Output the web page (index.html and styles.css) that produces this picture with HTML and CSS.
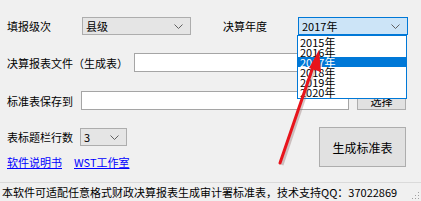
FILE: index.html
```html
<!DOCTYPE html>
<html lang="zh-CN">

<head>
  <meta charset="UTF-8">
  <link rel="stylesheet" href="styles.css">
  <title>决算报表转换</title>
</head>

<body>
  <div class="window">
    <div class="form">
      <div class="row row-level">
        <span class="label lbl-level">填报级次</span>
        <div class="combo combo-level">
          <span>县级</span>
          <svg class="chev" width="9" height="5" viewBox="0 0 9 5"><path d="M0.5 0.5 L4.5 4.5 L8.5 0.5" fill="none" stroke="#606060" stroke-width="1"/></svg>
        </div>
        <span class="label lbl-year">决算年度</span>
        <div class="combo combo-year">
          <span>2017年</span>
          <svg class="chev" width="9" height="5" viewBox="0 0 9 5"><path d="M0.5 0.5 L4.5 4.5 L8.5 0.5" fill="none" stroke="#606060" stroke-width="1"/></svg>
        </div>
      </div>

      <div class="row row-file">
        <span class="label lbl-file">决算报表文件（生成表）</span>
        <div class="textbox tb-file"></div>
        <div class="btn btn-pick">选择</div>
      </div>

      <div class="row row-save">
        <span class="label lbl-save">标准表保存到</span>
        <div class="textbox tb-save"></div>
        <div class="btn btn-pick">选择</div>
      </div>

      <div class="bottom">
        <div class="bottom-left">
          <div class="row row-rows">
            <span class="label lbl-rows">表标题栏行数</span>
            <div class="combo combo-rows">
              <span>3</span>
              <svg class="chev" width="9" height="5" viewBox="0 0 9 5"><path d="M0.5 0.5 L4.5 4.5 L8.5 0.5" fill="none" stroke="#606060" stroke-width="1"/></svg>
            </div>
          </div>
          <div class="links">
            <a href="#">软件说明书</a>
            <a href="#">WST工作室</a>
          </div>
        </div>
        <div class="btn btn-make">生成标准表</div>
      </div>
    </div>

    <div class="statusbar">
      <span>本软件可适配任意格式财政决算报表生成审计署标准表，技术支持QQ：37022869</span>
      <svg class="grip" width="8" height="8" viewBox="0 0 8 8">
        <rect x="6" y="0" width="1" height="1" fill="#a0a0a0"/>
        <rect x="3" y="3" width="1" height="1" fill="#a0a0a0"/>
        <rect x="6" y="3" width="1" height="1" fill="#a0a0a0"/>
        <rect x="0" y="6" width="1" height="1" fill="#a0a0a0"/>
        <rect x="3" y="6" width="1" height="1" fill="#a0a0a0"/>
        <rect x="6" y="6" width="1" height="1" fill="#a0a0a0"/>
      </svg>
    </div>

    <!-- 年度下拉列表 -->
    <ul class="droplist">
      <li>2015年</li>
      <li>2016年</li>
      <li class="selected">2017年</li>
      <li>2018年</li>
      <li>2019年</li>
      <li>2020年</li>
    </ul>

    <!-- 标注箭头 -->
    <svg class="arrow" width="421" height="201" viewBox="0 0 421 201">
      <line x1="281" y1="164" x2="314" y2="66" stroke="#8a6060" stroke-opacity="0.35" stroke-width="3" transform="translate(1,1)"/>
      <line x1="280" y1="163" x2="314" y2="64" stroke="#e8141c" stroke-width="3" stroke-linecap="round"/>
      <polygon points="319,50 321,72 309,68" fill="#e8141c"/>
    </svg>
  </div>
</body>

</html>
```

FILE: styles.css
```css
body {
  margin: 0;
  background-color: #f0f0f0;
  font-family: "Noto Sans CJK SC", "Microsoft YaHei", sans-serif;
  font-size: 11px;
  color: #000;
}

.window {
  position: relative;
  width: 421px;
  height: 201px;
  overflow: hidden;
}

.form {
  padding: 17px 0 0 7px;
  height: 182px;
  box-sizing: border-box;
}

.row {
  display: flex;
  align-items: center;
}

.label {
  flex: none;
  line-height: 14px;
}

.row-level {
  height: 18px;
}

.lbl-level {
  width: 75px;
}

.lbl-year {
  width: 75px;
  margin-left: 32px;
}

.combo {
  display: flex;
  align-items: center;
  justify-content: space-between;
  box-sizing: border-box;
  height: 18px;
  padding: 0 7px 0 3px;
  border: 1px solid #adadad;
  background-color: #e5e5e5;
}

.combo-level {
  width: 109px;
}

.combo-year {
  width: 110px;
  border-color: #0078d7;
  background-color: #cce4f7;
}

.combo-rows {
  width: 47px;
}

.row-file {
  margin-top: 18px;
  height: 19px;
}

.lbl-file {
  width: 127px;
}

.textbox {
  box-sizing: border-box;
  height: 19px;
  border: 1px solid #a5a5a5;
  background-color: #fff;
}

.tb-file {
  width: 215px;
}

.tb-save {
  width: 268px;
}

.btn {
  display: flex;
  align-items: center;
  justify-content: center;
  box-sizing: border-box;
  border: 1px solid #adadad;
  background-color: #e1e1e1;
}

.btn-pick {
  width: 49px;
  height: 19px;
  margin-left: 8px;
}

.row-save {
  margin-top: 19px;
  height: 19px;
}

.lbl-save {
  width: 74px;
}

.bottom {
  display: flex;
  margin-top: 17px;
}

.bottom-left {
  flex: 1;
}

.row-rows {
  margin-top: 1px;
  height: 18px;
}

.lbl-rows {
  width: 73px;
}

.links {
  display: flex;
  gap: 12px;
  margin-top: 10px;
  line-height: 12px;
}

.links a {
  color: #0000ff;
  text-decoration: underline;
}

.btn-make {
  width: 87px;
  height: 40px;
  margin-right: 15px;
  font-size: 12px;
}

.statusbar {
  display: flex;
  align-items: center;
  justify-content: space-between;
  box-sizing: border-box;
  height: 19px;
  padding-left: 2px;
  border-top: 1px solid #dadada;
  font-size: 11px;
}

.grip {
  margin: 8px 1px 0 0;
}

.droplist {
  position: absolute;
  left: 297px;
  top: 35px;
  width: 110px;
  margin: 0;
  padding: 1px 0;
  list-style: none;
  box-sizing: border-box;
  border: 1px solid #0078d7;
  background-color: #fff;
  font-size: 11px;
}

.droplist li {
  height: 10px;
  line-height: 10px;
  padding-left: 2px;
}

.droplist li.selected {
  background-color: #0078d7;
  color: #fff;
}

.arrow {
  position: absolute;
  left: 0;
  top: 0;
}
```
